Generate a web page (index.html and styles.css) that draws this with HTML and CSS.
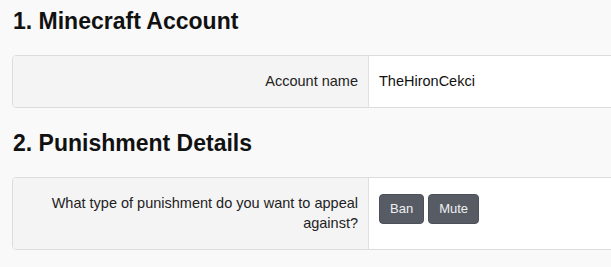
FILE: index.html
```html
<!DOCTYPE html>
<html lang="en">
<head>
<meta charset="utf-8">
<title>Appeal</title>
<link rel="stylesheet" href="styles.css">
</head>
<body>
<div class="page">
  <section class="section">
    <h2 class="section-title">1. Minecraft Account</h2>
    <div class="field-box">
      <div class="field-label">Account name</div>
      <div class="field-value">TheHironCekci</div>
    </div>
  </section>
  <section class="section">
    <h2 class="section-title">2. Punishment Details</h2>
    <div class="field-box">
      <div class="field-label">What type of punishment do you want to appeal against?</div>
      <div class="field-value">
        <button class="btn" type="button">Ban</button>
        <button class="btn" type="button">Mute</button>
      </div>
    </div>
  </section>
</div>
</body>
</html>
```

FILE: styles.css
```css
html, body {
  margin: 0;
  padding: 0;
  background: #f9f9f9;
  overflow: hidden;
}
body {
  font-family: "Liberation Sans", Arial, sans-serif;
  color: #222;
}
.page {
  padding: 8px 0 0 12px;
  width: 640px;
  display: flex;
  flex-direction: column;
  gap: 22px;
}
.section-title {
  margin: 0 0 21px 1px;
  font-size: 23px;
  line-height: 26px;
  font-weight: bold;
  color: #111;
}
.field-box {
  display: flex;
  border: 1px solid #dcdcdc;
  border-radius: 4px;
  background: #fff;
  overflow: hidden;
}
.field-label {
  flex: 0 0 335px;
  padding: 15px 10px 16px 10px;
  background: #f4f4f4;
  border-right: 1px solid #e0e0e0;
  text-align: right;
  font-size: 14.5px;
  line-height: 20px;
  color: #222;
}
.field-value {
  flex: 1;
  padding: 15px 10px;
  font-size: 14.5px;
  line-height: 20px;
  color: #111;
  background: #fff;
}
.field-value .btn {
  margin-top: 1px;
}
.btn {
  font-family: "Liberation Sans", Arial, sans-serif;
  font-size: 13px;
  line-height: 18px;
  padding: 5px 10px;
  border: 1px solid #4d5058;
  border-radius: 4px;
  background: #575b63;
  color: #eef0f2;
  cursor: pointer;
  vertical-align: top;
}
```
